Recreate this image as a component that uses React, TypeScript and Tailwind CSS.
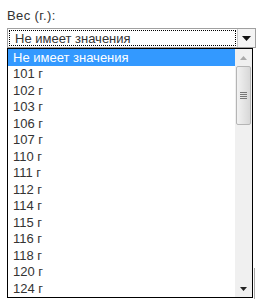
const ROWS = ["101 г", "102 г", "103 г", "106 г", "107 г", "110 г", "111 г", "112 г", "114 г", "115 г", "116 г", "118 г", "120 г", "124 г"];

export default function App() {
  return (
    <div className="relative h-[299px] w-[261px] overflow-hidden bg-white font-['Liberation_Sans',sans-serif] text-[13px] text-[#333]">
      <div className="px-[7px] pt-[8px] leading-[16px] tracking-[0.4px]">Вес (г.):</div>

      {/* closed select */}
      <div className="mx-[7px] mt-[4px] flex h-[20px] w-[249px] border border-[#a0a0a0] bg-white">
        <div className="m-[1px] flex flex-1 items-center border border-dotted border-black pl-[5px] leading-none">
          Не имеет значения
        </div>
        <div className="flex w-[18px] items-center justify-center border-l border-[#c8c8c8] bg-[#f4f4f4]">
          <svg width="9" height="5" viewBox="0 0 9 5">
            <path d="M0 0h9L4.5 5z" fill="#111" />
          </svg>
        </div>
      </div>

      {/* edge of the select underneath */}
      <div className="absolute left-[254px] top-[268px] h-[31px] w-px bg-[#a8a8a8]" />

      {/* open list */}
      <div className="absolute left-[7px] top-[48px] flex h-[250px] w-[246px] border border-black bg-white">
        <div className="flex-1">
          <div className="flex h-[16.5px] items-center bg-[#3399ff] pl-[5px] text-white">Не имеет значения</div>
          {ROWS.map((r) => (
            <div key={r} className="flex h-[16.5px] items-center pl-[5px]">
              {r}
            </div>
          ))}
        </div>
        <div className="flex w-[17px] flex-col bg-[#f0f0f0]">
          <div className="flex h-[17px] items-center justify-center">
            <svg width="7" height="4" viewBox="0 0 7 4">
              <path d="M0 4h7L3.5 0z" fill="#aaa" />
            </svg>
          </div>
          <div className="mx-[1px] flex h-[59px] items-center justify-center rounded-[2px] border border-[#b5b5b5] bg-gradient-to-r from-[#f2f2f2] to-[#d8d8d8]">
            <div className="flex flex-col gap-[1px]">
              <div className="h-px w-[7px] bg-[#777]" />
              <div className="h-px w-[7px] bg-[#777]" />
              <div className="h-px w-[7px] bg-[#777]" />
              <div className="h-px w-[7px] bg-[#777]" />
            </div>
          </div>
          <div className="flex-1" />
          <div className="flex h-[17px] items-center justify-center">
            <svg width="7" height="4" viewBox="0 0 7 4">
              <path d="M0 0h7L3.5 4z" fill="#222" />
            </svg>
          </div>
        </div>
      </div>
    </div>
  );
}
